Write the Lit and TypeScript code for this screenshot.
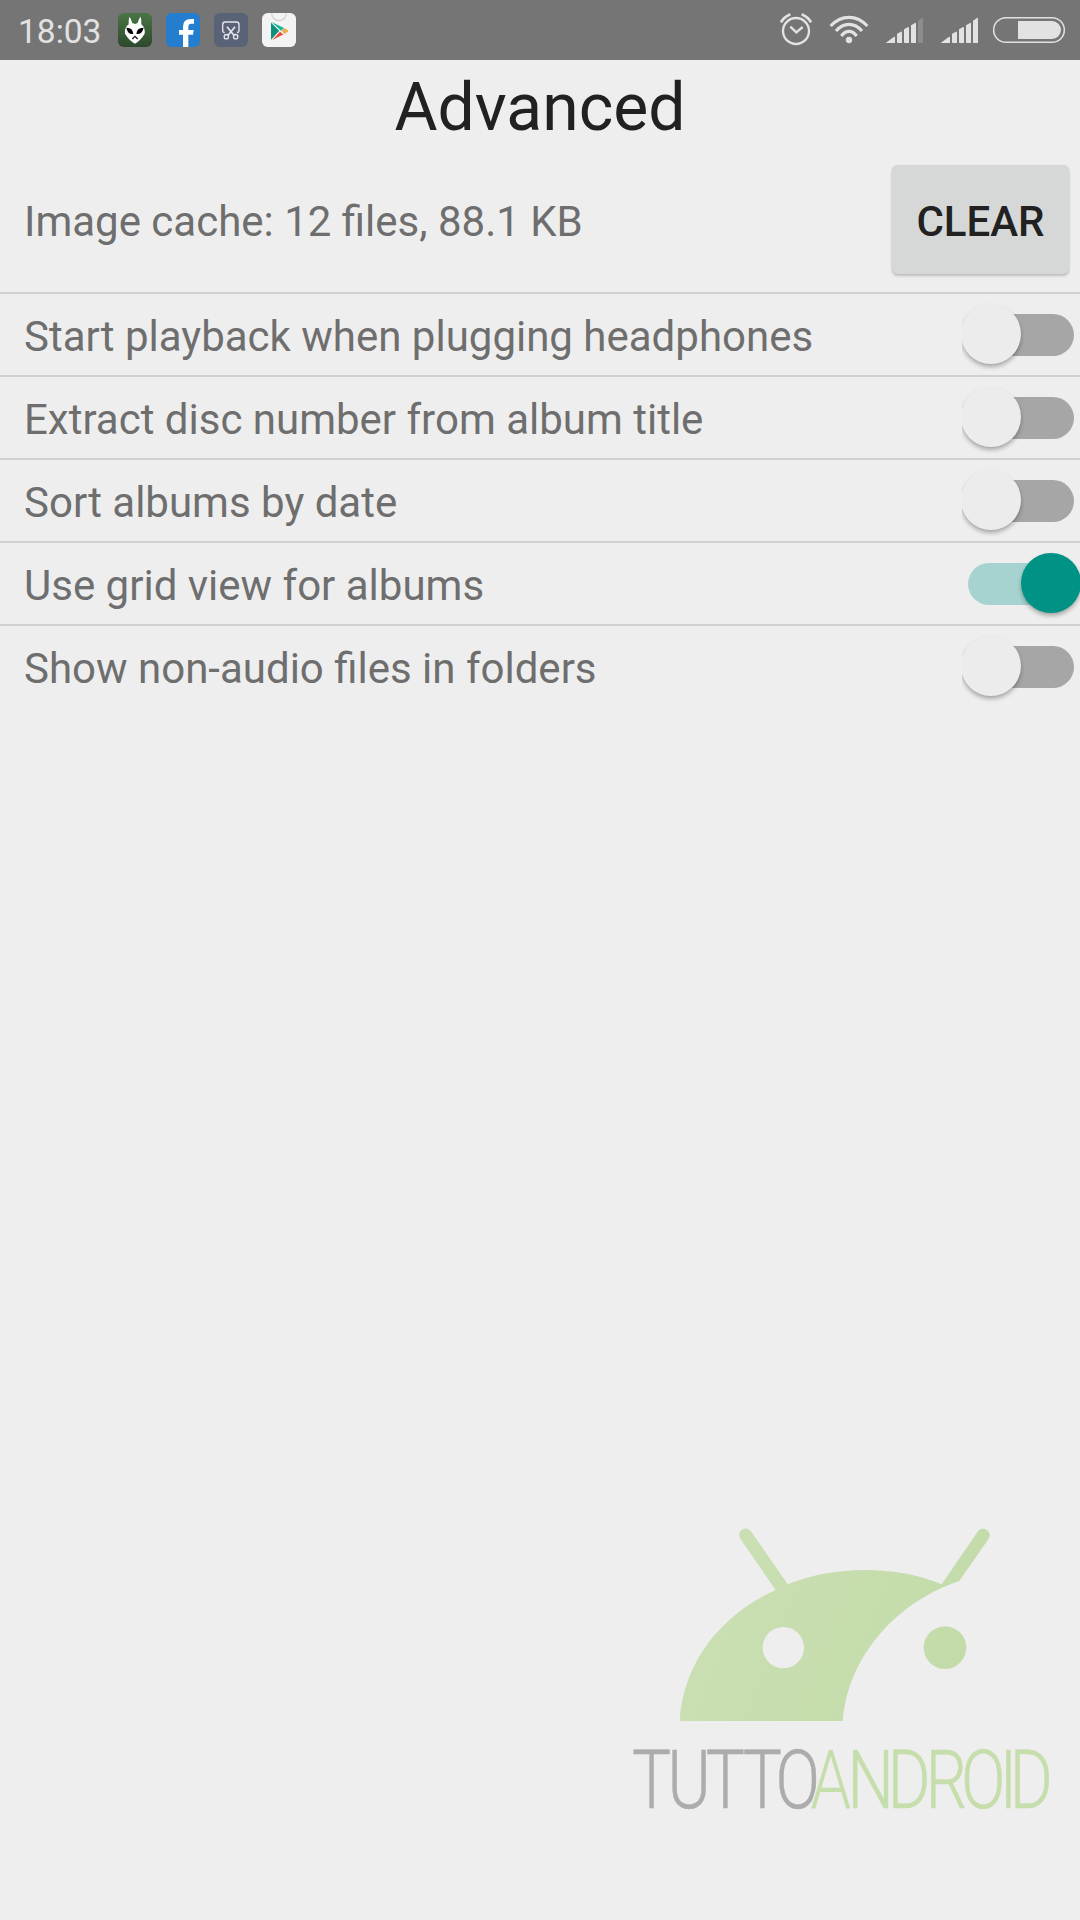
import { LitElement, html, css, svg } from "lit";
import { customElement, property } from "lit/decorators.js";

@customElement("status-bar")
class StatusBar extends LitElement {
  static styles = css`
    :host {
      display: flex;
      justify-content: space-between;
      height: 60px;
      background: #757575;
      color: #e2e2e2;
      font: 400 33.5px/60px Roboto, sans-serif;
    }
    .group { display: flex; }
    .left { padding-left: 18px; }
    .right { padding-right: 12px; }
    .time { width: 97px; padding-top: 2px; height: 58px; line-height: 60px; white-space: nowrap; }
    svg { display: block; height: 60px; flex: none; }
    .app { width: 40px; margin-right: 8px; }
    .alarm { width: 44px; }
    .wifi { width: 56px; }
    .signal { width: 55px; }
    .battery { width: 84px; }
  `;

  private bars(dimLast: boolean) {
    return svg`<g fill="#e2e2e2">
      <path d="M0 128 L23 111 Q27 109 27 113 V129 H0Z"/>
      <path d="M33 101 L45 95 Q48 94 48 98 V129 H35 Q33 129 33 127Z"/>
      <path d="M54 88 L66 81 Q69 80 69 84 V129 H56 Q54 129 54 127Z"/>
      <path d="M75 76 L87 69 Q90 67 90 71 V129 H77 Q75 129 75 127Z"/>
      <path d="M96 62 L108 54 Q111 52 111 56 V129 H98 Q96 129 96 127Z" fill=${dimLast ? "#8d8d8d" : "#e2e2e2"}/>
    </g>`;
  }

  render() {
    return html`
      <div class="group left">
        <div class="time">18:03</div>
        <svg class="app" viewBox="345 0 120 180">
          <defs><linearGradient id="g" x1="0" y1="0" x2="0" y2="1">
            <stop offset="0" stop-color="#4a7546"/><stop offset="1" stop-color="#2c492c"/>
          </linearGradient></defs>
          <rect x="354" y="39" width="102" height="102" rx="17" fill="url(#g)"/>
          <path d="M388 51 Q391 51 397 69 L405 72 L413 69 Q418 51 422 51 Q425 60 424 73 Q436 82 434 101 Q422 121 405 131 Q387 121 375 101 Q373 82 386 73 Q385 60 388 51Z" fill="#fff"/>
          <path d="M379 83 Q398 82 400 102 Q384 105 379 83Z M431 83 Q411 82 409 102 Q425 105 431 83Z" fill="#050505"/>
          <path d="M397 117 L405 109 L413 117" fill="none" stroke="#111" stroke-width="4"/>
        </svg>
        <svg class="app" viewBox="489 0 120 180">
          <rect x="498" y="39" width="102" height="102" rx="17" fill="#247dcf"/>
          <path d="M549 141 V104 H537 V90 H549 V80 Q549 57 572 57 H582 V71 H574 Q565 71 565 80 V90 H581 L579 104 H565 V141Z" fill="#fff"/>
        </svg>
        <svg class="app" viewBox="633 0 120 180">
          <rect x="642" y="39" width="102" height="102" rx="17" fill="#5a6278"/>
          <g fill="none" stroke="#e4e6ea" stroke-width="5">
            <path d="M674 98 Q668 98 668 91 V74 Q668 66 676 66 H709 Q717 66 717 74 V91 Q717 98 711 98" stroke-width="4"/>
            <path d="M681 80 L703 107 M705 80 L683 107"/>
            <circle cx="679" cy="110" r="6.5" stroke-width="4"/>
            <circle cx="707" cy="110" r="6.5" stroke-width="4"/>
          </g>
        </svg>
        <svg class="app" viewBox="777 0 120 180">
          <rect x="786" y="39" width="102" height="102" rx="17" fill="#f3f3f3"/>
          <path d="M815 40 A22 22 0 0 0 859 40" fill="none" stroke="#cfcfcf" stroke-width="3.5"/>
          <path d="M813 67 L838 92 L813 119Z" fill="#0e8f7c"/>
          <path d="M815 66 L852 84 L843 92Z" fill="#14b795"/>
          <path d="M845 92 L853 84 L864 91 Q866 93 864 95 L853 102Z" fill="#efae4e"/>
          <path d="M817 120 L840 95 L851 103Z" fill="#e8483f"/>
          <path d="M814 68 L850 103" stroke="#f3f3f3" stroke-width="2"/>
        </svg>
      </div>
      <div class="group right">
        <svg class="alarm" viewBox="42 0 132 180">
          <g fill="none" stroke="#e2e2e2">
            <circle cx="108" cy="93" r="39" stroke-width="7"/>
            <path d="M91 80 L109 97 L128 81" stroke-width="7"/>
            <path d="M63 67 Q71 52 91 43 M125 43 Q145 52 153 67" stroke-width="8"/>
          </g>
        </svg>
        <svg class="wifi" viewBox="174 0 168 180">
          <circle cx="267" cy="120" r="9.5" fill="#e2e2e2"/>
          <g fill="none" stroke="#e2e2e2" stroke-width="9.5">
            <path d="M212 78 Q236 52 267 52 Q298 52 322 78"/>
            <path d="M228 93 Q245 73 267 73 Q289 73 306 93"/>
            <path d="M244 108 Q254 94 267 94 Q280 94 290 108"/>
          </g>
        </svg>
        <svg class="signal" viewBox="-36 0 165 180">${this.bars(true)}</svg>
        <svg class="signal" viewBox="-36 0 165 180">${this.bars(false)}</svg>
        <svg class="battery" viewBox="672 0 252 180">
          <rect x="701" y="53" width="212" height="74" rx="37" fill="none" stroke="#e2e2e2" stroke-width="4.5"/>
          <path d="M774 63 H876 A27 27 0 0 1 876 117 H774Z" fill="#e2e2e2"/>
        </svg>
      </div>`;
  }
}

@customElement("toggle-switch")
class ToggleSwitch extends LitElement {
  @property({ type: Boolean, reflect: true }) on = false;

  static styles = css`
    :host {
      display: flex;
      align-items: center;
      box-sizing: border-box;
      width: 118px;
      height: 81px;
      padding: 0 6px;
      overflow: hidden;
    }
    .track {
      position: relative;
      width: 106px;
      height: 42px;
      border-radius: 21px;
      background: #a6a6a6;
    }
    .thumb {
      position: absolute;
      top: -10px;
      left: -7px;
      width: 60px;
      height: 60.5px;
      border-radius: 50%;
      background: #ececec;
      box-shadow: 0 3px 4px rgba(0, 0, 0, 0.28), 0 1px 1px rgba(0, 0, 0, 0.04);
    }
    :host([on]) .track { background: #a6d3cf; }
    :host([on]) .thumb { left: 52.5px; background: #009385; }
  `;

  render() {
    return html`<div class="track"><div class="thumb"></div></div>`;
  }
}

@customElement("brand-mark")
class BrandMark extends LitElement {
  static styles = css`
    :host { display: block; width: 460px; height: 330px; }
    svg { display: block; width: 100%; height: 100%; }
    .word { font: 300 243px Roboto, sans-serif; stroke-width: 1.5px; }
    .grey { fill: #acacac; stroke: #acacac; }
    .green { fill: #c6deac; stroke: #c6deac; }
    .cut { stroke: #eee; stroke-width: 9px; paint-order: stroke; }
  `;

  private squeeze = 0.81;

  /** Spreads letter centers, given in artboard units, over the squeezed axis. */
  private centers(xs: number[]) {
    return xs.map((x) => (x / this.squeeze).toFixed(1)).join(" ");
  }

  render() {
    const place = `translate(0 893) scale(${this.squeeze} 1)`;
    return html`<svg viewBox="0 0 1380 990">
      <defs><linearGradient id="leaf" gradientUnits="userSpaceOnUse" x1="250" y1="250" x2="1000" y2="550">
        <stop offset="0" stop-color="#cadfb3"/><stop offset="1" stop-color="#c3dba9"/>
      </linearGradient></defs>
      <g fill="url(#leaf)">
        <path fill-rule="evenodd" d="M179 633 C188 470 290 320 467 240 L361 86 A18.5 18.5 0 0 1 393 64 L503 223 Q610 180 735 180 Q862 180 965 223 L1073 65 A18.5 18.5 0 0 1 1106 86 L1018 213 C810 283 680 460 669 633Z M428 413 a62 62 0 1 0 124 0 a62 62 0 1 0 -124 0Z"/>
        <circle cx="975" cy="413" r="64"/>
      </g>
      <text class="word grey" text-anchor="middle" transform=${place} x=${this.centers([94.5, 207, 316, 427, 533])}>TUTTO</text>
      <text class="word green" text-anchor="middle" transform=${place} x=${this.centers([632, 752, 867, 979, 1090, 1165, 1234])}><tspan class="cut">A</tspan>NDROID</text>
    </svg>`;
  }
}

@customElement("app-root")
class AppRoot extends LitElement {
  static styles = css`
    :host {
      display: flex;
      flex-direction: column;
      box-sizing: border-box;
      width: 1080px;
      height: 1920px;
      padding-bottom: 80px;
      overflow: hidden;
      background: #eee;
      color: #6e6e6e;
      font: 400 42px/1 Roboto, sans-serif;
    }
    .title {
      height: 90px;
      margin: 0;
      color: #212121;
      font-size: 66px;
      font-weight: 400;
      line-height: 96px;
      text-align: center;
    }
    .row {
      display: flex;
      align-items: center;
      justify-content: space-between;
      box-sizing: border-box;
      height: 83px;
      padding-left: 24px;
      border-top: 2px solid #d0d0d0;
    }
    .label { line-height: 50px; white-space: nowrap; padding-top: 5px; }
    .cache { height: 142px; padding: 0 11px 0 24px; border: 0; }
    .cache .label { padding-top: 1px; }
    .clear {
      width: 177px;
      height: 109px;
      margin-bottom: 3px;
      padding: 4px 0 0;
      border: 0;
      border-radius: 6px;
      background: #d6d8d7;
      box-shadow: 0 2px 3px rgba(0, 0, 0, 0.2), 0 0 1px rgba(0, 0, 0, 0.15);
      color: #212121;
      font: 500 42px/50px Roboto, sans-serif;
    }
    .brand { margin: auto 0 0; align-self: flex-end; }
  `;

  private options = [
    { label: "Start playback when plugging headphones", on: false },
    { label: "Extract disc number from album title", on: false },
    { label: "Sort albums by date", on: false },
    { label: "Use grid view for albums", on: true },
    { label: "Show non-audio files in folders", on: false },
  ];

  render() {
    return html`
      <status-bar></status-bar>
      <h1 class="title">Advanced</h1>
      <div class="row cache">
        <span class="label">Image cache: 12 files, 88.1 KB</span>
        <button class="clear">CLEAR</button>
      </div>
      ${this.options.map((o) => html`
        <div class="row">
          <span class="label">${o.label}</span>
          <toggle-switch ?on=${o.on}></toggle-switch>
        </div>`)}
      <brand-mark class="brand"></brand-mark>`;
  }
}
